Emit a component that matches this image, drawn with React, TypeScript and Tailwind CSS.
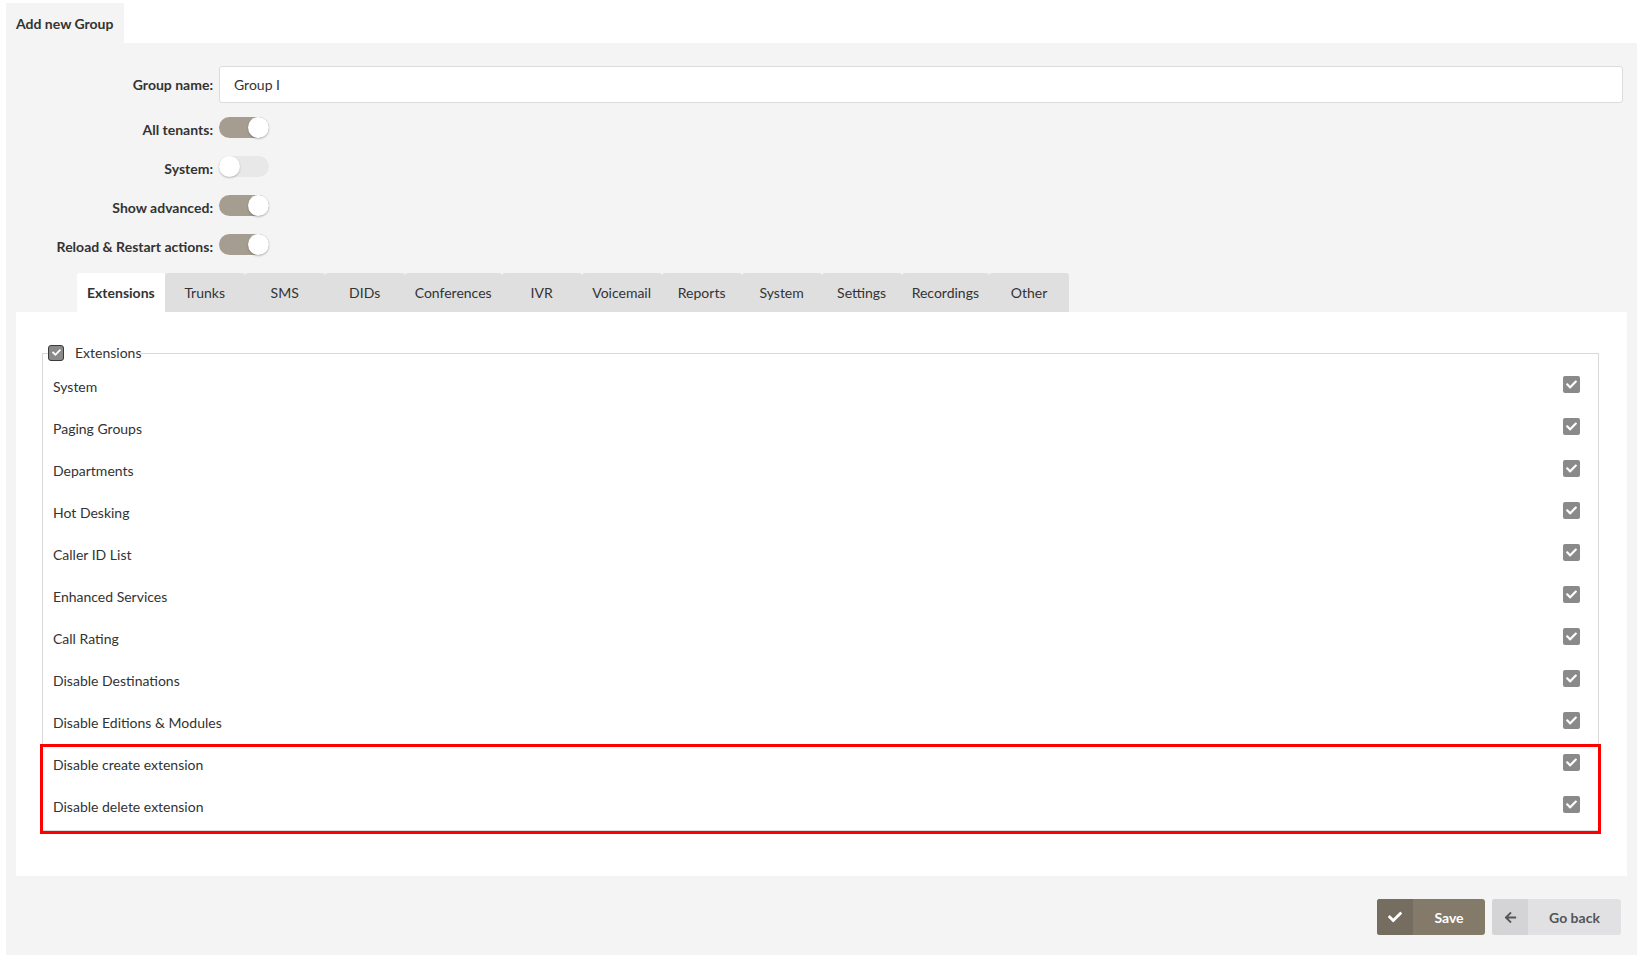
import React from 'react';
import { FaCheck, FaArrowLeft } from 'react-icons/fa';

const toggles = [
  { label: 'All tenants:', on: true },
  { label: 'System:', on: false },
  { label: 'Show advanced:', on: true },
  { label: 'Reload & Restart actions:', on: true },
];

const tabs = [
  'Extensions',
  'Trunks',
  'SMS',
  'DIDs',
  'Conferences',
  'IVR',
  'Voicemail',
  'Reports',
  'System',
  'Settings',
  'Recordings',
  'Other',
];

const permissions = [
  'System',
  'Paging Groups',
  'Departments',
  'Hot Desking',
  'Caller ID List',
  'Enhanced Services',
  'Call Rating',
  'Disable Destinations',
  'Disable Editions & Modules',
];

const highlighted = ['Disable create extension', 'Disable delete extension'];

const Toggle: React.FC<{ on: boolean }> = ({ on }) => (
  <span
    className={
      on
        ? 'relative inline-flex w-[50px] h-[21px] rounded-full bg-[#a59d8f] justify-end'
        : 'relative inline-flex w-[50px] h-[21px] rounded-full bg-[#e8e8e8] justify-start'
    }
  >
    <span className="w-[21px] h-[21px] rounded-full bg-white shadow-[0_1px_2px_rgba(0,0,0,0.25)]" />
  </span>
);

const CheckBox: React.FC = () => (
  <span className="flex items-center justify-center w-[17px] h-[17px] rounded-[2px] bg-[#8a8a8a] mb-[5px]">
    <FaCheck className="text-white w-[11px] h-[11px]" />
  </span>
);

const PermissionRow: React.FC<{ label: string }> = ({ label }) => (
  <div className="flex items-center justify-between h-[42px] pl-[10px] pr-[18px]">
    <span>{label}</span>
    <CheckBox />
  </div>
);

const App: React.FC = () => {
  return (
    <div className="min-h-[962px] bg-white pt-[3px] pl-[6px] pr-[4px] font-['Lato',sans-serif] text-[14px] text-[#333]">
      <div className="w-[118px] h-[40px] bg-[#f4f4f4] flex items-center pl-[10px] font-bold">
        Add new Group
      </div>

      <div className="bg-[#f4f4f4] h-[912px] pt-[23px] flex flex-col">
        <div className="flex items-center h-[37px] pr-[14px]">
          <label className="w-[207px] text-right font-bold">Group name:</label>
          <input
            className="ml-[6px] flex-1 h-[37px] rounded-[3px] border border-[#dcdcdc] bg-white pl-[14px] outline-none text-[#333]"
            defaultValue="Group I"
          />
        </div>

        <div className="flex flex-col mt-[5px]">
          {toggles.map((t) => (
            <div key={t.label} className="flex items-center h-[39px]">
              <label className="w-[207px] text-right font-bold translate-y-[2px]">{t.label}</label>
              <span className="ml-[6px] flex">
                <Toggle on={t.on} />
              </span>
            </div>
          ))}
        </div>

        <div className="flex mt-[9px] pl-[71px] h-[39px]">
          {tabs.map((tab, i) => (
            <div
              key={tab}
              className={
                i === 0
                  ? 'min-w-[80px] px-[10px] flex items-center justify-center rounded-t-[3px] bg-white font-bold'
                  : 'min-w-[80px] px-[10px] flex items-center justify-center rounded-t-[3px] bg-[#dfdfdf]'
              }
            >
              {tab}
            </div>
          ))}
        </div>

        <div className="mx-[10px] bg-white h-[564px] pt-[31px] pl-[26px] pr-[28px]">
          <fieldset className="border border-[#d9d9d9] pt-[1px] pb-[2px] px-0 m-0 min-w-0">
            <legend className="ml-[5px] p-0">
              <span className="inline-flex items-center h-[20px] -translate-y-[2px]">
                <span className="flex items-center justify-center w-[16px] h-[16px] rounded-[3px] border-[1.5px] border-[#3a3a3a] bg-[#8a8a8a]">
                  <FaCheck className="text-white w-[9px] h-[9px]" />
                </span>
                <span className="ml-[11px]">Extensions</span>
              </span>
            </legend>

            {permissions.map((p) => (
              <PermissionRow key={p} label={p} />
            ))}

            <div className="relative">
              {highlighted.map((p) => (
                <PermissionRow key={p} label={p} />
              ))}
              <span className="absolute -left-[3px] -right-[3px] top-0 -bottom-[6px] border-[3px] border-[#ff0000] pointer-events-none" />
            </div>
          </fieldset>
        </div>

        <div className="flex justify-end gap-[7px] mt-[23px] pr-[16px]">
          <button className="flex h-[36px] w-[108px] rounded-[3px] overflow-hidden bg-[#837a6a] text-white font-bold">
            <span className="w-[36px] h-full flex items-center justify-center bg-[#756d5f]">
              <FaCheck className="w-[14px] h-[14px]" />
            </span>
            <span className="flex-1 h-full flex items-center justify-center">Save</span>
          </button>
          <button className="flex h-[36px] w-[129px] rounded-[3px] overflow-hidden bg-[#e1e1e3] text-[#555] font-bold">
            <span className="w-[36px] h-full flex items-center justify-center bg-[#d4d4d6]">
              <FaArrowLeft className="w-[13px] h-[13px]" />
            </span>
            <span className="flex-1 h-full flex items-center justify-center">Go back</span>
          </button>
        </div>
      </div>
    </div>
  );
};

export default App;
